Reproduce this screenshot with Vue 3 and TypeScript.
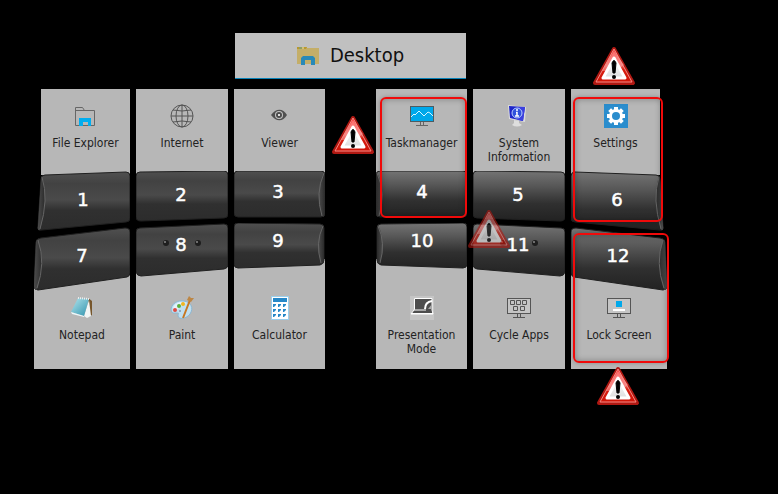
<script setup lang="ts">
type Side = 'left' | 'right'

interface Tile {
  key: number
  label: string
  icon: string
  width: number
  shape: 'outer' | 'middle' | 'inner'
  side: Side
  x: number
  y: number
  framed?: boolean
  warning?: boolean
  bumps?: boolean
}

const topTiles: Tile[] = [
  { key: 1, label: 'File Explorer', icon: 'folder', width: 96, shape: 'outer', side: 'left', x: 49, y: 35 },
  { key: 2, label: 'Internet', icon: 'globe', width: 92, shape: 'middle', side: 'left', x: 45, y: 30 },
  { key: 3, label: 'Viewer', icon: 'eye', width: 91, shape: 'inner', side: 'left', x: 44, y: 27 },
  { key: 4, label: 'Taskmanager', icon: 'monitor', width: 91, shape: 'inner', side: 'right', x: 46, y: 27, framed: true, warning: true },
  { key: 5, label: 'System Information', icon: 'info', width: 92, shape: 'middle', side: 'right', x: 45, y: 30 },
  { key: 6, label: 'Settings', icon: 'gear', width: 96, shape: 'outer', side: 'right', x: 46, y: 35, framed: true, warning: true },
]

const bottomTiles: Tile[] = [
  { key: 7, label: 'Notepad', icon: 'notepad', width: 96, shape: 'outer', side: 'left', x: 48, y: 39 },
  { key: 8, label: 'Paint', icon: 'palette', width: 92, shape: 'middle', side: 'left', x: 45, y: 28, bumps: true },
  { key: 9, label: 'Calculator', icon: 'calculator', width: 91, shape: 'inner', side: 'left', x: 44, y: 24 },
  { key: 10, label: 'Presentation Mode', icon: 'laptop', width: 91, shape: 'inner', side: 'right', x: 46, y: 24 },
  { key: 11, label: 'Cycle Apps', icon: 'cycle', width: 92, shape: 'middle', side: 'right', x: 45, y: 28, bumps: true, warning: true },
  { key: 12, label: 'Lock Screen', icon: 'lock', width: 96, shape: 'outer', side: 'right', x: 47, y: 39, framed: true, warning: true },
]

const rows = [
  { name: 'top', tiles: topTiles, height: 60 },
  { name: 'bottom', tiles: bottomTiles, height: 68 },
]

// Key caps are drawn for the left half of the board and mirrored for the right half.
const caps: Record<string, { body: string; facet: string; edge: string }> = {
  'top-outer': {
    body: 'M7 8Q7 4 11 4L92 1Q96 1 96 5V47Q96 51 92 51L8 59Q3 60 4 55Z',
    facet: 'M8 5Q15 28 6 59Q3 60 4 55L7 8Z',
    edge: 'M8 6Q15 28 6 58',
  },
  'top-middle': {
    body: 'M0 5Q0 1 4 1L88 0Q92 0 92 4V43Q92 47 88 47L5 50Q0 50 0 46Z',
    facet: '',
    edge: '',
  },
  'top-inner': {
    body: 'M0 4Q0 0 4 0H87Q91 0 91 4V42Q91 46 87 46H4Q0 46 0 42Z',
    facet: 'M90 1Q80 22 89 46Q91 45 91 42V4Z',
    edge: 'M90 2Q81 22 88 45',
  },
  'bottom-outer': {
    body: 'M2 19Q3 15 7 15L91 5Q96 5 96 9V50Q96 53 93 54L4 67Q0 67 0 63Z',
    facet: 'M3 16Q13 40 3 67Q0 67 0 63L2 19Z',
    edge: 'M4 17Q12 40 3 65',
  },
  'bottom-middle': {
    body: 'M0 9Q0 5 4 5L88 1Q92 1 92 5V42Q92 45 88 46L5 53Q1 53 0 49Z',
    facet: '',
    edge: '',
  },
  'bottom-inner': {
    body: 'M0 4Q0 0 4 0L86 1Q90 1 90 5V37Q90 41 86 42L4 45Q0 45 0 41Z',
    facet: 'M89 2Q80 20 88 41Q90 40 90 37V5Z',
    edge: 'M89 3Q81 20 87 40',
  },
}

const mirror = (tile: Tile) => (tile.side === 'right' ? `translate(${tile.width} 0) scale(-1 1)` : undefined)
const cap = (row: string, tile: Tile) => caps[`${row}-${tile.shape}`]
</script>

<template>
  <main class="page">
    <svg class="defs" aria-hidden="true">
      <defs>
        <linearGradient id="cap" x1="0" y1="0" x2="0" y2="1">
          <stop offset="0" stop-color="#505050" />
          <stop offset="0.2" stop-color="#424242" />
          <stop offset="0.48" stop-color="#4a4a4a" />
          <stop offset="0.66" stop-color="#303030" />
          <stop offset="1" stop-color="#2c2c2c" />
        </linearGradient>
        <linearGradient id="capRight" x1="0" y1="0" x2="0" y2="1">
          <stop offset="0" stop-color="#747474" />
          <stop offset="0.3" stop-color="#575757" />
          <stop offset="0.65" stop-color="#303030" />
          <stop offset="1" stop-color="#222" />
        </linearGradient>
        <linearGradient id="facet" x1="0" y1="0" x2="1" y2="0">
          <stop offset="0" stop-color="#4c4c4c" />
          <stop offset="1" stop-color="#2a2a2a" />
        </linearGradient>
        <linearGradient id="warnRed" x1="0" y1="0" x2="0" y2="1">
          <stop offset="0" stop-color="#f52a2a" />
          <stop offset="0.5" stop-color="#f06a66" />
          <stop offset="0.62" stop-color="#d81e10" />
          <stop offset="1" stop-color="#d01408" />
        </linearGradient>
        <linearGradient id="warnWhite" x1="0" y1="0" x2="0" y2="1">
          <stop offset="0" stop-color="#fff" />
          <stop offset="1" stop-color="#dedede" />
        </linearGradient>
        <linearGradient id="note" x1="0" y1="0" x2="1" y2="1">
          <stop offset="0" stop-color="#b5e6ee" />
          <stop offset="1" stop-color="#2f93ae" />
        </linearGradient>
      </defs>
    </svg>

    <h1 class="title">
      <svg class="title-icon" viewBox="0 0 22 20" aria-hidden="true">
        <path d="M0 1H10V2H22V18H0Z" fill="#c4ae68" />
        <path d="M0 1H10L9 3H0Z" fill="#b9982e" />
        <path d="M2 2H5" stroke="#5ea6a0" />
        <path d="M5 2H7" stroke="#eee6bb" />
        <path d="M4 18V12L6 10H16L18 12V19H14V14H8V19H4Z" fill="#2989b7" />
      </svg>
      <span>Desktop</span>
    </h1>

    <section class="board">
      <ul v-for="row in rows" :key="row.name" class="row" :class="row.name">
        <li v-for="tile in row.tiles" :key="tile.key" class="cell" :class="[`k${tile.key}`, tile.shape, tile.side]">
          <button type="button" class="tile">
            <svg class="cap" :height="row.height" :viewBox="`0 0 ${tile.width} ${row.height}`">
              <g :transform="mirror(tile)">
                <path :d="cap(row.name, tile).body" :fill="tile.side === 'left' ? 'url(#cap)' : 'url(#capRight)'" stroke="#202020" />
                <path :d="cap(row.name, tile).facet" fill="url(#facet)" />
                <path :d="cap(row.name, tile).edge" fill="none" stroke="#666" />
              </g>
              <g v-if="tile.bumps">
                <g v-for="dx in [-15, 17]" :key="dx">
                  <circle :cx="tile.x + dx" :cy="tile.y - 8" r="3" fill="#1e1e1e" />
                  <circle :cx="tile.x + dx - 1" :cy="tile.y - 9" r="1" fill="#888" />
                </g>
              </g>
              <text class="digit" :x="tile.x" :y="tile.y" text-anchor="middle">{{ tile.key }}</text>
            </svg>

            <span class="panel">
              <svg class="icon" viewBox="0 0 24 24" aria-hidden="true">
                <g v-if="tile.icon === 'folder'">
                  <path d="M1.500 21.500V3.500H8.500L10.500 6.500H20.500V21.500Z" fill="none" stroke="#666" />
                  <path d="M1 6.500H11" stroke="#666" />
                  <path d="M5 14H17V22H14V18H9V22H5Z" fill="#00adef" />
                </g>
                <g v-else-if="tile.icon === 'globe'" fill="none" stroke="#555">
                  <circle cx="12" cy="12" r="11" />
                  <ellipse cx="12" cy="12" rx="6" ry="11" />
                  <path d="M12 1V23M1 12H23M3 6Q12 8 21 6M3 18Q12 16 21 18" />
                </g>
                <g v-else-if="tile.icon === 'eye'">
                  <path d="M3 11C8 4 15 4 19 11C15 18 8 18 3 11Z" fill="#505050" />
                  <circle cx="11" cy="11" r="4" fill="#c4c4c4" />
                  <circle cx="11" cy="11" r="3" fill="#4d4d4d" />
                  <rect x="10" y="10" width="2" height="2" fill="#ddd" />
                </g>
                <g v-else-if="tile.icon === 'monitor'">
                  <rect x="0.5" y="2.500" width="23" height="15" fill="#00a8ea" stroke="#4f5b60" />
                  <path d="M1 13L4 10L5 11L9 7L14 12L18 8L20 9L23 12" fill="none" stroke="#d9f5ff" />
                  <path d="M10.500 18V21M13.500 18V21M6 21.500H18" stroke="#666" />
                </g>
                <g v-else-if="tile.icon === 'info'" transform="translate(-2 0)">
                  <path d="M3 1L21 3L20 18L4 15Z" fill="#dcdcdc" />
                  <path d="M4 2L20 3L18 17L5 14Z" fill="#1f27c9" />
                  <path d="M12 3L20 3L18 17L13 16Z" fill="#3b40df" />
                  <circle cx="12" cy="9" r="5" fill="#2f51dc" stroke="#b9ccff" />
                  <path d="M12 5V7M11 8.500H12V12M10 12H14" stroke="#fff" fill="none" stroke-width="1.500" />
                  <path d="M9 16L14 17V19L17 21Q12 24 7 21L9 19Z" fill="#dedede" />
                </g>
                <g v-else-if="tile.icon === 'gear'">
                  <rect width="24" height="24" fill="#2b8dcd" />
                  <g fill="#fff">
                    <rect v-for="angle in [0, 45, 90, 135]" :key="angle" x="10" y="3" width="4" height="18" :transform="`rotate(${angle} 12 12)`" />
                    <circle cx="12" cy="12" r="7" />
                  </g>
                  <circle cx="12" cy="12" r="4" fill="#2b8dcd" />
                </g>
                <g v-else-if="tile.icon === 'notepad'">
                  <path d="M18 2L22 5V19L18 21Z" fill="#76562c" />
                  <path d="M19 4L21 20L17 22L14 20Z" fill="#f1f5f5" />
                  <path d="M8 2L19 3L14 20L1 16Z" fill="url(#note)" />
                  <path d="M1 16L14 20L14 21L2 18Z" fill="#edf8fa" />
                  <path d="M8 2L19 3" stroke="#eee" stroke-dasharray="1 1" stroke-width="2" />
                </g>
                <g v-else-if="tile.icon === 'palette'">
                  <path d="M1 13C2 7 8 4 14 5C21 6 24 12 20 18C16 23 9 24 8 20C8 17 10 17 6 17Q1 18 1 13Z" fill="#bfdff0" stroke="#8db7d2" />
                  <path d="M3 12C5 6 12 5 17 7Q12 8 9 12T3 15Z" fill="#e4f2fb" />
                  <circle cx="5" cy="14" r="2" fill="#dc4b41" />
                  <circle cx="9" cy="10" r="2" fill="#59ae3c" />
                  <circle cx="13" cy="8" r="2" fill="#f0b51f" />
                  <circle cx="10" cy="15" r="1" fill="#8796ab" />
                  <path d="M13 22L20 4" stroke="#c77722" stroke-width="2" />
                  <path d="M17 4L19 0L21 2L24 2L21 6Z" fill="#bd8644" />
                </g>
                <g v-else-if="tile.icon === 'calculator'">
                  <rect x="3.500" y="0.500" width="17" height="23" fill="#fff" stroke="#9ccfec" />
                  <rect x="5" y="2" width="14" height="4" fill="#2688c8" />
                  <g v-for="cy in [8, 13, 18]" :key="cy">
                    <path v-for="cx in [5, 10, 15]" :key="cx" :d="`M${cx} ${cy}h3v1l-2 2h-1z`" fill="#2688c8" />
                  </g>
                </g>
                <g v-else-if="tile.icon === 'laptop'">
                  <rect width="24" height="24" fill="#c5c5c5" />
                  <path d="M4.500 13V2.500H22V14L23 18H1L4 14Z" fill="#4e4e4e" stroke="#fff" />
                  <path d="M4 14H16M1 17.500H23" stroke="#fff" />
                  <path d="M15 13Q15 6 22 5" fill="none" stroke="#fff" stroke-width="2" />
                  <path d="M18 13L22 8V13Z" fill="#aaa" />
                </g>
                <g v-else-if="tile.icon === 'cycle'" fill="none" stroke="#555">
                  <rect x="0.500" y="2.500" width="23" height="15" fill="#c5c5c5" />
                  <path d="M3.500 4.500H7.500V8.500H3.500ZM9.500 4.500H13.500V8.500H9.500ZM15.500 4.500H19.500V8.500H15.500ZM6.500 10.500H10.500V14.500H6.500ZM13.500 10.500H17.500V14.500H13.500Z" />
                  <path d="M10.500 18V21M13.500 18V21M6 21.500H18" />
                </g>
                <g v-else>
                  <rect x="0.500" y="2.500" width="23" height="15" fill="#c5c5c5" stroke="#555" />
                  <rect x="9" y="5" width="6" height="6" fill="#00a8ea" />
                  <rect x="6" y="13" width="12" height="2" fill="#fff" />
                  <path d="M10.500 18V21M13.500 18V21M6 21.500H18" stroke="#555" />
                </g>
              </svg>
              <span class="label">{{ tile.label }}</span>
            </span>
          </button>
          <span v-if="tile.framed" class="frame"></span>
          <svg v-if="tile.warning" class="warning" viewBox="0 0 44 42" role="img" aria-label="Warning">
            <path d="M22 4L41 38H3Z" fill="#b81a14" stroke="#b01812" stroke-width="4" stroke-linejoin="round" />
            <path d="M22 4L40 37H4Z" fill="url(#warnRed)" stroke="#f58a84" stroke-linejoin="round" />
            <path d="M22 6L10 26Q26 26 32 20Z" fill="#ff9a98" opacity="0.6" />
            <path d="M22 13L33 33H11Z" fill="url(#warnWhite)" stroke="#fff" stroke-width="3" stroke-linejoin="round" />
            <path d="M20 18Q22 13 24 18L23 28H21Z" fill="#000" stroke="#000" />
            <circle cx="22" cy="32" r="2" fill="#000" />
          </svg>
        </li>
      </ul>
    </section>
  </main>
</template>

<style>
body {
  background: #000;
}
</style>

<style scoped>
.page {
  box-sizing: border-box;
  min-height: 100vh;
  padding: 33px 111px 33px 34px;
  background: #000;
  color: #222;
  font-family: "DejaVu Sans Condensed", "DejaVu Sans", sans-serif;
}

.defs {
  position: absolute;
  width: 0;
  height: 0;
}

.title {
  box-sizing: border-box;
  display: flex;
  align-items: center;
  justify-content: center;
  gap: 11px;
  width: 231px;
  max-width: 100%;
  margin: 0 auto 10px;
  padding: 8px 0;
  border-bottom: 1px solid #0782b8;
  background: #c0c0c0;
  color: #111;
  font-size: 20px;
  font-weight: 400;
  line-height: 29px;
}

.title-icon {
  width: 22px;
  height: 20px;
}

.row {
  display: grid;
  grid-template-columns: 96fr 92fr 91fr 39fr 91fr 92fr 96fr;
  column-gap: 6px;
  margin: 0;
  padding: 0;
  list-style: none;
}

.right.inner {
  grid-column: 5;
}

.cell {
  position: relative;
  min-width: 0;
}

.tile {
  display: flex;
  flex-direction: column;
  width: 100%;
  height: 100%;
  padding: 0;
  border: 0;
  background: none;
  color: inherit;
  font: inherit;
  cursor: pointer;
}

.top .tile {
  flex-direction: column-reverse;
  justify-content: flex-end;
}

.cap {
  display: block;
  flex: none;
  width: 100%;
  position: relative;
  z-index: 1;
}

.top .cap {
  margin: -4px 0 -8px;
}

.bottom .tile {
  min-height: 146px;
  background: linear-gradient(transparent 36px, #b7b7b7 36px);
}

.bottom .outer .tile {
  background: linear-gradient(transparent 52px, #b7b7b7 52px);
}

.panel {
  box-sizing: border-box;
  display: flex;
  flex-direction: column;
  align-items: center;
  gap: 8px;
  padding: 5px 4px 0;
}

.top .panel {
  min-height: 86px;
  padding-top: 15px;
  background: #b7b7b7;
}

.top .outer.left .panel {
  margin-left: 7px;
}

.top .outer.right .panel {
  margin-right: 7px;
}

.icon {
  flex: none;
  width: 24px;
  height: 24px;
}

.label {
  font-size: 12px;
  line-height: 14px;
  text-align: center;
}

.digit {
  fill: #fff;
  stroke: #fff;
  stroke-width: 0.5px;
  font-family: "DejaVu Sans", sans-serif;
  font-size: 18px;
}

.frame {
  position: absolute;
  z-index: 2;
  box-sizing: border-box;
  border: 2px solid #f00a0a;
  border-radius: 6px;
  box-shadow: inset 0 0 6px rgba(0, 0, 0, 0.3), 0 0 4px rgba(0, 0, 0, 0.25);
  pointer-events: none;
}

.k4 .frame {
  inset: 8px 0 5px 4px;
}

.k6 .frame {
  inset: 8px 4px 1px 2px;
}

.k12 .frame {
  inset: 10px -2px 6px 2px;
}

.warning {
  position: absolute;
  z-index: 3;
  width: 44px;
  height: 42px;
}

.k4 .warning {
  top: 25px;
  left: -45px;
}

.k6 .warning {
  top: -44px;
  left: 21px;
}

.k11 .warning {
  top: -15px;
  left: -6px;
  opacity: 0.6;
}

.k12 .warning {
  top: 142px;
  left: 25px;
}
</style>
